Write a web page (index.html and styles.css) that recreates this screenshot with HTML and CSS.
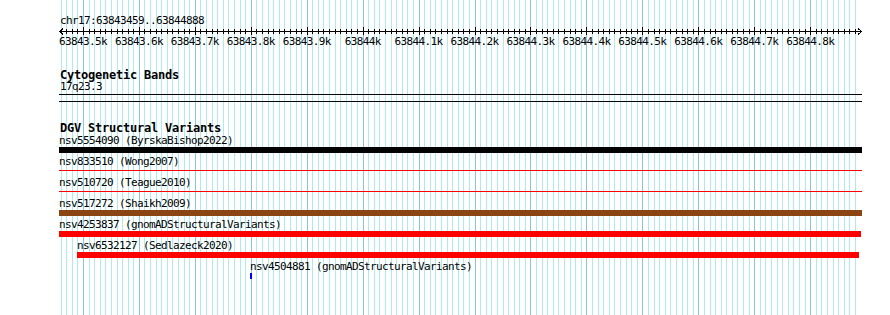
FILE: index.html
```html
<!DOCTYPE html>
<html lang="en">
<head>
    <meta charset="UTF-8">
    <title>DGV Structural Variants</title>
    <link rel="stylesheet" href="styles.css">
</head>
<body>
    <div class="panel">
        <svg class="grid" id="grid" width="890" height="315"></svg>

        <div class="ruler-track">
            <div class="segment-name">chr17:63843459..63844888</div>
            <svg class="ruler" id="ruler" width="890" height="8"></svg>
            <div class="ruler-labels">
                <span>63843.5k</span>
                <span>63843.6k</span>
                <span>63843.7k</span>
                <span>63843.8k</span>
                <span>63843.9k</span>
                <span>63844k</span>
                <span>63844.1k</span>
                <span>63844.2k</span>
                <span>63844.3k</span>
                <span>63844.4k</span>
                <span>63844.5k</span>
                <span>63844.6k</span>
                <span>63844.7k</span>
                <span>63844.8k</span>
            </div>
        </div>

        <div class="track cyto">
            <div class="track-title">Cytogenetic Bands</div>
            <div class="band-label">17q23.3</div>
        </div>
        <div class="divider first"></div>
        <div class="divider second"></div>

        <div class="track dgv">
            <div class="track-title">DGV Structural Variants</div>
            <div class="feature" style="margin-left: 59px; width: 803px;">
                <div class="feature-label">nsv5554090 (ByrskaBishop2022)</div>
                <div class="glyph box black"></div>
            </div>
            <div class="feature" style="margin-left: 59px; width: 803px;">
                <div class="feature-label">nsv833510 (Wong2007)</div>
                <div class="glyph line"></div>
            </div>
            <div class="feature" style="margin-left: 59px; width: 803px;">
                <div class="feature-label">nsv510720 (Teague2010)</div>
                <div class="glyph line"></div>
            </div>
            <div class="feature" style="margin-left: 59px; width: 803px;">
                <div class="feature-label">nsv517272 (Shaikh2009)</div>
                <div class="glyph box brown"></div>
            </div>
            <div class="feature" style="margin-left: 59px; width: 802px;">
                <div class="feature-label">nsv4253837 (gnomADStructuralVariants)</div>
                <div class="glyph box red"></div>
            </div>
            <div class="feature" style="margin-left: 77px; width: 782px;">
                <div class="feature-label">nsv6532127 (Sedlazeck2020)</div>
                <div class="glyph box red"></div>
            </div>
            <div class="feature" style="margin-left: 250px; width: 2px;">
                <div class="feature-label">nsv4504881 (gnomADStructuralVariants)</div>
                <div class="glyph box blue"></div>
            </div>
        </div>
    </div>

    <script>
        const startBp = 63843459;
        const endBp = 63844888;
        const x0 = 60;
        const pxPerBp = 800 / 1430;

        function toX(bp) {
            return Math.round(x0 + (bp - startBp) * pxPerBp) + 0.5;
        }

        // background grid, one line per 10bp, darker every 100bp
        let grid = '';
        let ticks = '';
        for (let bp = 63843460; bp <= endBp; bp += 10) {
            const x = toX(bp);
            const major = bp % 100 === 0;
            grid += `<line x1="${x}" y1="0" x2="${x}" y2="315" class="${major ? 'major' : 'minor'}"/>`;
            if (major) {
                ticks += `<line x1="${x}" y1="0" x2="${x}" y2="8"/>`;
            } else {
                ticks += `<line x1="${x}" y1="2" x2="${x}" y2="7"/>`;
            }
        }
        document.getElementById('grid').innerHTML = grid;

        // the scale bar with arrow heads on both ends
        ticks += '<line x1="59" y1="4.5" x2="862" y2="4.5"/>';
        ticks += '<polyline points="63,1.5 59.5,4.5 63,7.5"/>';
        ticks += '<polyline points="858,1.5 861.5,4.5 858,7.5"/>';
        document.getElementById('ruler').innerHTML = ticks;
    </script>
</body>
</html>
```

FILE: styles.css
```css
body {
    margin: 0;
    background: #fff;
}
.panel {
    position: relative;
    isolation: isolate;
    box-sizing: border-box;
    width: 890px;
    height: 315px;
    padding-top: 14px;
    overflow: hidden;
    font-family: 'DejaVu Sans Mono', 'Liberation Mono', monospace;
    font-size: 11px;
    letter-spacing: -0.62px;
    color: #000;
}
.grid {
    position: absolute;
    left: 0;
    top: 0;
    z-index: -1;
    shape-rendering: crispEdges;
}
.grid line.minor {
    stroke: #aeeaee;
    stroke-width: 1;
}
.grid line.major {
    stroke: #86c6ea;
    stroke-width: 1;
}
.segment-name {
    padding-left: 60px;
    line-height: 13px;
}
.ruler {
    display: block;
    shape-rendering: crispEdges;
}
.ruler line,
.ruler polyline {
    stroke: #000;
    stroke-width: 1;
    fill: none;
}
.ruler-labels {
    display: flex;
    margin-left: 55px;
    line-height: 13px;
}
.ruler-labels span {
    flex: 0 0 55.94px;
    text-align: center;
    white-space: nowrap;
}
.track-title {
    padding-left: 60px;
    font-size: 12px;
    font-weight: bold;
    line-height: 11px;
    letter-spacing: -0.22px;
}
.cyto {
    margin-top: 22px;
}
.band-label {
    padding-left: 60px;
    line-height: 12px;
}
.divider {
    margin-left: 59px;
    width: 803px;
    height: 1px;
    background: #000;
}
.divider.first {
    margin-top: 1px;
}
.divider.second {
    margin-top: 6px;
}
.dgv {
    margin-top: 21px;
}
.feature {
    padding-bottom: 2px;
}
.feature-label {
    line-height: 13px;
    white-space: nowrap;
}
.glyph.box {
    height: 6px;
}
.glyph.line {
    height: 1px;
    margin: 2px 0 3px;
    background: #f00;
}
.black { background: #000; }
.brown { background: #8b4513; }
.red { background: #f00; }
.blue { background: #00f; }
```
